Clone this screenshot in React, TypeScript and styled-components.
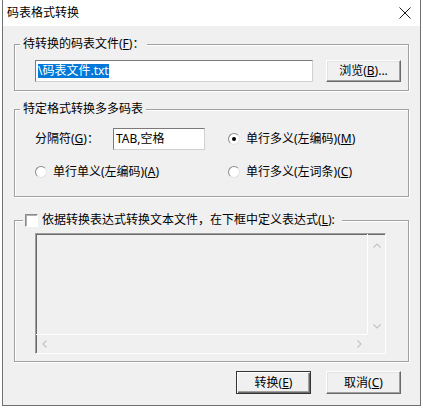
import React from "react";
import styled, { createGlobalStyle } from "styled-components";

const Global = createGlobalStyle`
  html, body { margin: 0; padding: 0; background: #ffffff; }
  body {
    font-family: "Noto Sans", "Noto Sans CJK SC", sans-serif;
    font-size: 12px;
    color: #000;
  }
  * { box-sizing: border-box; }
`;

const Window = styled.div`
  width: 419px;
  height: 406px;
  margin-left: 2px;
  background: #f0f0f0;
  border: 1px solid #707070;
  border-top: none;
  display: flex;
  flex-direction: column;
`;

const TitleBar = styled.div`
  height: 26px;
  flex: none;
  background: #ffffff;
  display: flex;
  align-items: center;
  justify-content: space-between;
  padding: 0 9px 0 4px;
  line-height: 16px;
`;

const Body = styled.div`
  display: flex;
  flex-direction: column;
  padding: 0 11px;
`;

const GroupBox = styled.div<{ $mt: number }>`
  margin-top: ${(p) => p.$mt}px;
  border: 1px solid #a0a0a0;
  box-shadow: 1px 1px 0 #ffffff, inset 1px 1px 0 #ffffff;
`;

const Caption = styled.div<{ $ml: number; $pl: number; $pr: number }>`
  width: fit-content;
  height: 16px;
  line-height: 16px;
  margin-top: -9px;
  margin-left: ${(p) => p.$ml}px;
  padding: 0 ${(p) => p.$pr}px 0 ${(p) => p.$pl}px;
  background: #f0f0f0;
  display: flex;
  align-items: center;
  gap: 4px;
  white-space: nowrap;
`;

const FileRow = styled.div`
  display: flex;
  align-items: center;
  gap: 13px;
  padding: 8px 7px 8px 20px;
`;

const EditBox = styled.div<{ $w: number }>`
  width: ${(p) => p.$w}px;
  height: 22px;
  background: #ffffff;
  border: 1px solid;
  border-color: #7a7a7a #d0d0d0 #d0d0d0 #7a7a7a;
  display: flex;
  align-items: center;
  padding: 0 2px;
  line-height: 14px;
  white-space: nowrap;
`;

const Selected = styled.span`
  display: inline-block;
  height: 14px;
  line-height: 14px;
  background: #0078d7;
  color: #ffffff;
`;

const Button = styled.button<{ $default?: boolean; $h: number }>`
  width: 75px;
  height: ${(p) => p.$h}px;
  padding: 0;
  margin: 0;
  font: inherit;
  line-height: 16px;
  color: #000;
  background: #f0f0f0;
  border: 1px solid;
  border-color: ${(p) =>
    p.$default ? "#333333" : "#ffffff #696969 #696969 #ffffff"};
  box-shadow: ${(p) =>
    p.$default
      ? "inset 1px 1px 0 #ffffff, inset -1px -1px 0 #696969, inset -2px -2px 0 #a0a0a0"
      : "inset -1px -1px 0 #a0a0a0, inset 1px 1px 0 #e3e3e3"};
  display: flex;
  align-items: center;
  justify-content: center;
`;

const Key = styled.span`
  text-decoration: underline;
  text-underline-offset: 1px;
`;

const OptionsGrid = styled.div`
  display: grid;
  grid-template-columns: 193px 1fr;
  grid-template-rows: 22px 22px;
  row-gap: 11px;
  padding: 11px 0 13px 20px;
`;

const Cell = styled.div`
  display: flex;
  align-items: center;
  line-height: 16px;
  white-space: nowrap;
`;

const FieldLabel = styled.span`
  width: 78px;
`;

const RadioCircle = styled.span<{ $checked?: boolean }>`
  width: 12px;
  height: 12px;
  border-radius: 50%;
  border: 1px solid;
  border-color: #8a8a8a #e3e3e3 #e3e3e3 #8a8a8a;
  background: #ffffff;
  margin-right: 6px;
  display: flex;
  align-items: center;
  justify-content: center;
  flex: none;
  &::after {
    content: "";
    width: 4px;
    height: 4px;
    border-radius: 50%;
    background: ${(p) => (p.$checked ? "#000" : "transparent")};
  }
`;

const CheckBox = styled.span`
  width: 13px;
  height: 13px;
  flex: none;
  background: #ffffff;
  border: 1px solid;
  border-color: #8a8a8a #ffffff #ffffff #8a8a8a;
  box-shadow: inset 1px 1px 0 #b0b0b0;
`;

const ExprContent = styled.div`
  padding: 5px 22px 7px 20px;
`;

const TextArea = styled.div`
  width: 351px;
  height: 121px;
  background: #f0f0f0;
  border: 1px solid;
  border-color: #a0a0a0 #ffffff #ffffff #a0a0a0;
  box-shadow: inset 1px 1px 0 #696969;
  display: grid;
  grid-template-columns: 1fr 18px;
  grid-template-rows: 1fr 19px;
`;

const Editor = styled.div``;

const VScroll = styled.div`
  border-left: 1px solid #ffffff;
  display: flex;
  flex-direction: column;
  justify-content: space-between;
  align-items: center;
  padding: 9px 0 5px;
`;

const HScroll = styled.div`
  border-top: 1px solid #ffffff;
  display: flex;
  justify-content: space-between;
  align-items: center;
  padding: 0 5px 0 6px;
`;

const Corner = styled.div``;

const ButtonRow = styled.div`
  display: flex;
  justify-content: flex-end;
  gap: 15px;
  margin-top: 9px;
  padding-right: 8px;
`;

const Chevron = ({ dir }: { dir: "up" | "down" | "left" | "right" }) => {
  const pts: Record<string, string> = {
    up: "0.5,4.5 4,1 7.5,4.5",
    down: "0.5,0.5 4,4 7.5,0.5",
    left: "4.5,0.5 1,4 4.5,7.5",
    right: "0.5,0.5 4,4 0.5,7.5",
  };
  const vertical = dir === "up" || dir === "down";
  return (
    <svg
      width={vertical ? 8 : 5}
      height={vertical ? 5 : 8}
      viewBox={vertical ? "0 0 8 5" : "0 0 5 8"}
    >
      <polyline points={pts[dir]} fill="none" stroke="#c4c4c4" strokeWidth="1.2" />
    </svg>
  );
};

const CloseIcon = () => (
  <svg width="12" height="12" viewBox="0 0 12 12">
    <path d="M0.5 0.5 L11.5 11.5 M11.5 0.5 L0.5 11.5" stroke="#1a1a1a" strokeWidth="1" />
  </svg>
);

export default function App() {
  return (
    <>
      <Global />
      <Window>
        <TitleBar>
          <span>码表格式转换</span>
          <CloseIcon />
        </TitleBar>
        <Body>
          <GroupBox $mt={18}>
            <Caption $ml={5} $pl={3} $pr={3}>
              <span>
                待转换的码表文件(<Key>F</Key>)：
              </span>
            </Caption>
            <FileRow>
              <EditBox $w={278}>
                <Selected>\码表文件.txt</Selected>
              </EditBox>
              <Button $h={22}>
                浏览(<Key>B</Key>)...
              </Button>
            </FileRow>
          </GroupBox>

          <GroupBox $mt={18}>
            <Caption $ml={5} $pl={3} $pr={3}>
              <span>特定格式转换多多码表</span>
            </Caption>
            <OptionsGrid>
              <Cell>
                <FieldLabel>
                  分隔符(<Key>G</Key>)：
                </FieldLabel>
                <EditBox $w={92}>TAB,空格</EditBox>
              </Cell>
              <Cell>
                <RadioCircle $checked />
                <span>
                  单行多义(左编码)(<Key>M</Key>)
                </span>
              </Cell>
              <Cell>
                <RadioCircle />
                <span>
                  单行单义(左编码)(<Key>A</Key>)
                </span>
              </Cell>
              <Cell>
                <RadioCircle />
                <span>
                  单行多义(左词条)(<Key>C</Key>)
                </span>
              </Cell>
            </OptionsGrid>
          </GroupBox>

          <GroupBox $mt={23}>
            <Caption $ml={8} $pl={2} $pr={7}>
              <CheckBox />
              <span>
                依据转换表达式转换文本文件，在下框中定义表达式(<Key>L</Key>):
              </span>
            </Caption>
            <ExprContent>
              <TextArea>
                <Editor />
                <VScroll>
                  <Chevron dir="up" />
                  <Chevron dir="down" />
                </VScroll>
                <HScroll>
                  <Chevron dir="left" />
                  <Chevron dir="right" />
                </HScroll>
                <Corner />
              </TextArea>
            </ExprContent>
          </GroupBox>

          <ButtonRow>
            <Button $default $h={23}>
              转换(<Key>E</Key>)
            </Button>
            <Button $h={23}>
              取消(<Key>C</Key>)
            </Button>
          </ButtonRow>
        </Body>
      </Window>
    </>
  );
}
